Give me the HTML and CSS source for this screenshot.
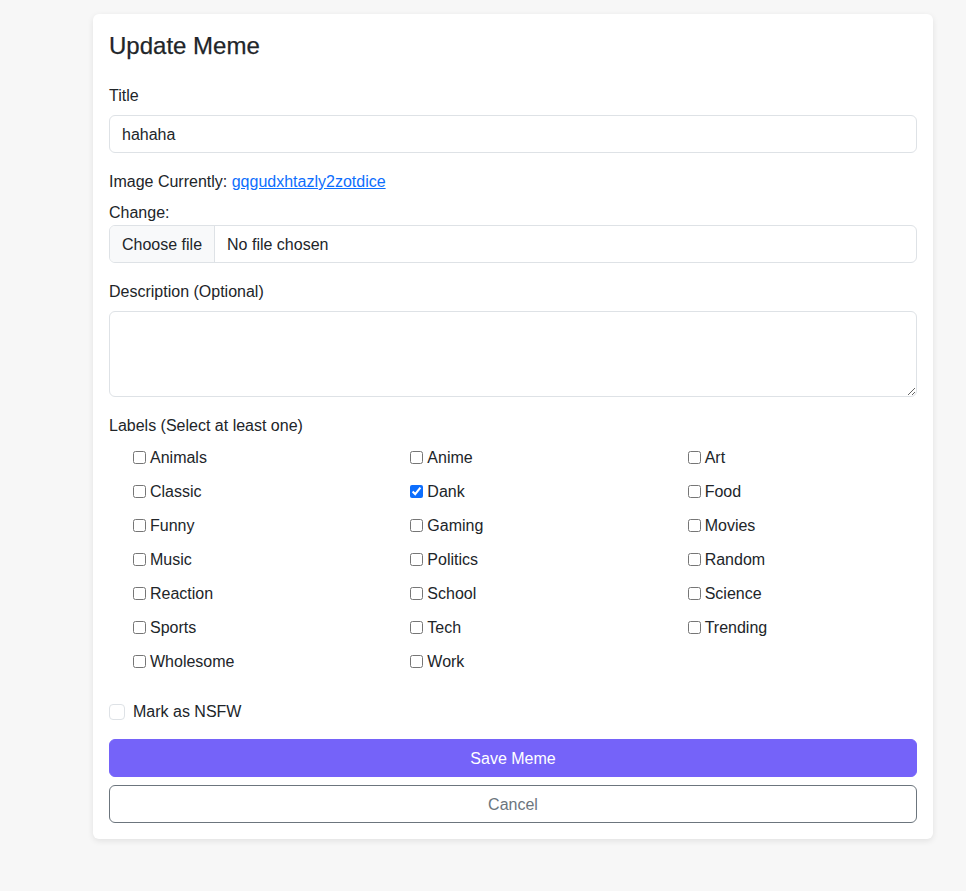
FILE: index.html
```html
<!DOCTYPE html>
<html>
<head>
<meta charset="utf-8">
<link rel="stylesheet" href="styles.css">
</head>
<body>
<div class="page">
  <div class="card">
    <h4 class="card-title">Update Meme</h4>
    <form class="form">
      <div class="field">
        <label class="label">Title</label>
        <input class="control" type="text" value="hahaha">
      </div>
      <div class="field">
        <div class="current">Image Currently: <a href="#" class="link">gqgudxhtazly2zotdice</a></div>
        <div class="change">Change:</div>
        <div class="file">
          <span class="file-btn">Choose file</span>
          <span class="file-name">No file chosen</span>
        </div>
      </div>
      <div class="field">
        <label class="label">Description (Optional)</label>
        <textarea class="control area"></textarea>
      </div>
      <div class="field labels">
        <label class="label">Labels (Select at least one)</label>
        <div class="grid">
          <label class="opt"><input type="checkbox">Animals</label>
          <label class="opt"><input type="checkbox">Anime</label>
          <label class="opt"><input type="checkbox">Art</label>
          <label class="opt"><input type="checkbox">Classic</label>
          <label class="opt"><input type="checkbox" checked>Dank</label>
          <label class="opt"><input type="checkbox">Food</label>
          <label class="opt"><input type="checkbox">Funny</label>
          <label class="opt"><input type="checkbox">Gaming</label>
          <label class="opt"><input type="checkbox">Movies</label>
          <label class="opt"><input type="checkbox">Music</label>
          <label class="opt"><input type="checkbox">Politics</label>
          <label class="opt"><input type="checkbox">Random</label>
          <label class="opt"><input type="checkbox">Reaction</label>
          <label class="opt"><input type="checkbox">School</label>
          <label class="opt"><input type="checkbox">Science</label>
          <label class="opt"><input type="checkbox">Sports</label>
          <label class="opt"><input type="checkbox">Tech</label>
          <label class="opt"><input type="checkbox">Trending</label>
          <label class="opt"><input type="checkbox">Wholesome</label>
          <label class="opt"><input type="checkbox">Work</label>
        </div>
      </div>
      <label class="nsfw"><span class="nsfw-box"></span>Mark as NSFW</label>
      <button type="button" class="btn btn-save">Save Meme</button>
      <button type="button" class="btn btn-cancel">Cancel</button>
    </form>
  </div>
</div>
</body>
</html>
```
FILE: styles.css
```css
* { box-sizing: border-box; }
html, body {
  margin: 0;
  background: #f7f7f7;
  font-family: "Liberation Sans", Arial, sans-serif;
  font-size: 16px;
  line-height: 24px;
  color: #212529;
}
.page {
  padding-top: 14px;
  padding-left: 93px;
  height: 891px;
}
.card {
  width: 840px;
  background: #fff;
  border-radius: 6px;
  box-shadow: 0 2px 6px rgba(0,0,0,0.09);
  padding: 16px 16px 16px 16px;
}
.card-title {
  margin: 0 0 24px 0;
  padding-top: 1px;
  height: 29px;
  font-size: 24px;
  line-height: 29px;
  font-weight: 500;
  -webkit-text-stroke: 0.25px #212529;
}
.form { display: flex; flex-direction: column; }
.field { margin-bottom: 16px; display: flex; flex-direction: column; }
.label { display: block; margin-bottom: 7px; padding-top: 1px; }
.control {
  width: 100%;
  height: 38px;
  border: 1px solid #dee2e6;
  border-radius: 6px;
  padding: 7px 12px 5px;
  font: inherit;
  color: #212529;
  background: #fff;
  outline: none;
}
.area { height: 86px; resize: vertical; display: block; }
.current { margin-bottom: 6px; padding-top: 1px; }
.link { color: #0d6efd; text-decoration: underline; }
.change { margin-bottom: 0; padding-top: 1px; }
.file {
  display: flex;
  height: 38px;
  border: 1px solid #dee2e6;
  border-radius: 6px;
  overflow: hidden;
}
.file-btn {
  background: #f8f9fa;
  border-right: 1px solid #dee2e6;
  padding: 7px 12px 5px;
  line-height: 24px;
}
.file-name { padding: 7px 12px 5px; line-height: 24px; }
.labels { margin-bottom: 26px; }
.grid {
  display: grid;
  grid-template-columns: repeat(3, 277.33px);
  margin-left: 24px;
  row-gap: 10px;
}
.opt {
  display: flex;
  align-items: center;
  height: 24px;
  padding-top: 1px;
}
.opt input {
  width: 13px;
  height: 13px;
  margin: 0 4px 0 0;
  accent-color: #0d6efd;
}
.nsfw {
  display: flex;
  align-items: center;
  height: 24px;
  padding-top: 1px;
  margin-bottom: 16px;
}
.nsfw-box {
  width: 16px;
  height: 16px;
  border: 1px solid #dee2e6;
  border-radius: 4px;
  margin-right: 8px;
  background: #fff;
}
.btn {
  display: block;
  width: 100%;
  height: 38px;
  font: inherit;
  border-radius: 6px;
  cursor: pointer;
  padding-top: 2px;
}
.btn-save {
  background: #7563f9;
  border: 1px solid #7563f9;
  color: #fff;
  margin-bottom: 8px;
}
.btn-cancel {
  background: #fff;
  border: 1px solid #6c757d;
  color: #6c757d;
}
```
